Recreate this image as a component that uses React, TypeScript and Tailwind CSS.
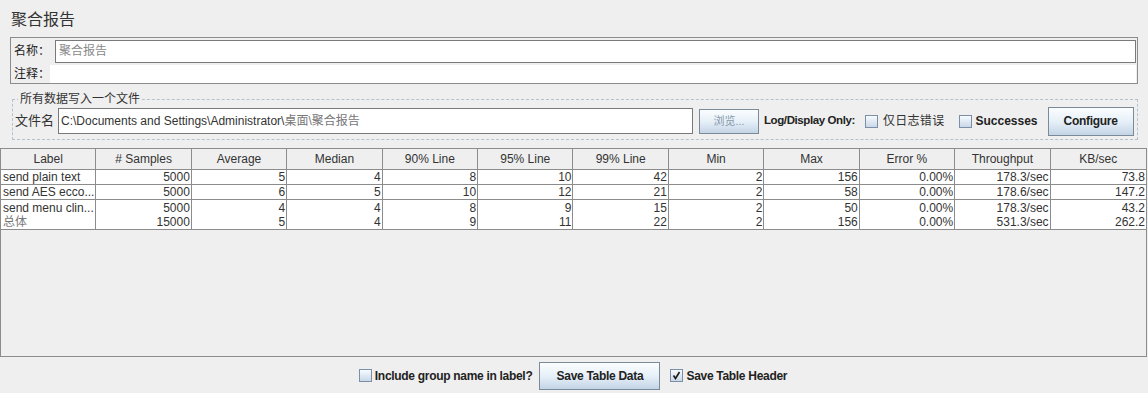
import React from "react"

const columns = [
  "Label",
  "# Samples",
  "Average",
  "Median",
  "90% Line",
  "95% Line",
  "99% Line",
  "Min",
  "Max",
  "Error %",
  "Throughput",
  "KB/sec",
]

const rows = [
  ["send plain text", "5000", "5", "4", "8", "10", "42", "2", "156", "0.00%", "178.3/sec", "73.8"],
  ["send AES ecco...", "5000", "6", "5", "10", "12", "21", "2", "58", "0.00%", "178.6/sec", "147.2"],
  ["send menu clin...", "5000", "4", "4", "8", "9", "15", "2", "50", "0.00%", "178.3/sec", "43.2"],
  ["总体", "15000", "5", "4", "9", "11", "22", "2", "156", "0.00%", "531.3/sec", "262.2"],
]

function CheckBox({ checked = false }: { checked?: boolean }) {
  return (
    <span className="w-[13px] h-[13px] border border-[#7b8fa6] bg-gradient-to-b from-[#f7fbfe] to-[#c9d8e8] flex items-center justify-center shrink-0">
      {checked && (
        <svg width="9" height="9" viewBox="0 0 9 9">
          <path d="M1.5 4.5 L3.5 7.5 L7.5 1" stroke="#1a1a1a" strokeWidth="1.6" fill="none" />
        </svg>
      )}
    </span>
  )
}

function MetalButton({ children, className = "" }: { children: React.ReactNode; className?: string }) {
  return (
    <div
      className={
        "border border-[#7a8a99] bg-gradient-to-b from-[#fbfdff] via-[#e6f0f8] to-[#c4d4e6] flex items-center justify-center shrink-0 whitespace-nowrap " +
        className
      }
    >
      {children}
    </div>
  )
}

export default function App() {
  return (
    <div className="w-[1148px] h-[393px] bg-[#efefef] overflow-hidden text-[#222] font-['Liberation_Sans','Noto_Sans_CJK_SC',sans-serif]">
      <div className="pl-[11px] pt-[10px] h-[37px] text-[16px] leading-[20px] text-[#333]">聚合报告</div>

      <div className="ml-[10px] w-[1128px] h-[47px] border border-[#8c8c8c] flex flex-col">
        <div className="flex items-center h-[25px] pt-[1px]">
          <span className="w-[44px] pl-[3px] text-[12px] text-[#222]">名称：</span>
          <div className="flex-1 h-[23px] mr-[1px] bg-white border border-[#7a7a7a] flex items-center pl-[3px] text-[12px] text-[#8a8a8a]">
            聚合报告
          </div>
        </div>
        <div className="flex items-center h-[20px] pt-[1px]">
          <span className="w-[39px] pl-[3px] text-[12px] text-[#222]">注释：</span>
          <div className="flex-1 h-[18px] mr-[1px] bg-white" />
        </div>
      </div>

      <fieldset className="ml-[12px] w-[1126px] mt-[8px] h-[48px] border border-dashed border-[#b4c2d0] px-[2px] pb-0">
        <legend className="ml-[3px] px-[2px] text-[12px] leading-[14px] text-[#333]">所有数据写入一个文件</legend>
        <div className="flex items-center h-[28px] mt-[1px] whitespace-nowrap">
          <span className="w-[43px] shrink-0 text-[13px] text-[#333]">文件名</span>
          <div className="w-[635px] shrink-0 h-[26px] bg-white border border-[#7a7a7a] flex items-center pl-[2px] text-[12px] text-[#333]">
            C:\Documents and Settings\Administrator\<span className="text-[#777]">桌面\聚合报告</span>
          </div>
          <MetalButton className="ml-[6px] w-[60px] h-[25px] text-[11px] text-[#8899aa]">浏览...</MetalButton>
          <span className="ml-[5px] shrink-0 text-[11.5px] font-bold tracking-[-0.4px] text-[#222]">Log/Display Only:</span>
          <span className="ml-[10px] shrink-0">
            <CheckBox />
          </span>
          <span className="ml-[5px] shrink-0 text-[12px] text-[#333] tracking-[0.3px]">仅日志错误</span>
          <span className="ml-[15px] shrink-0">
            <CheckBox />
          </span>
          <span className="ml-[3px] shrink-0 text-[12px] font-bold text-[#222]">Successes</span>
          <MetalButton className="ml-[10px] w-[86px] h-[29px] text-[12px] font-bold tracking-[-0.3px] text-[#222]">
            Configure
          </MetalButton>
        </div>
      </fieldset>

      <div className="mt-[8px] w-[1147px] h-[209px] border-l border-r border-b border-[#8c8c8c] flex flex-col">
        <div className="grid grid-cols-12 h-[22px] border-t border-b border-[#8c8c8c] bg-[#efefef]">
          {columns.map((c) => (
            <div
              key={c}
              className="border-r border-[#8c8c8c] flex items-center justify-center text-[12px] text-[#333] last:border-r-0"
            >
              {c}
            </div>
          ))}
        </div>
        {rows.map((r, i) => (
          <div
            key={i}
            className={
              "grid grid-cols-12 h-[15px] bg-white " +
              (i === 0 || i === 1 || i === 3 ? "border-b border-[#8c8c8c]" : "")
            }
          >
            {r.map((v, j) => (
              <div
                key={j}
                className={
                  "border-r border-[#8c8c8c] flex items-center text-[12px] leading-[14px] text-[#333] overflow-hidden whitespace-nowrap last:border-r-0 " +
                  (j === 0 ? "justify-start pl-[2px]" : "justify-end pr-[1px]") +
                  (j === 0 && i === 3 ? " text-[#777]" : "")
                }
              >
                {v}
              </div>
            ))}
          </div>
        ))}
        <div className="flex-1" />
      </div>

      <div className="flex items-center justify-center h-[37px] pr-[2px]">
        <CheckBox />
        <span className="ml-[3px] text-[12px] font-bold tracking-[-0.3px] text-[#222]">Include group name in label?</span>
        <MetalButton className="ml-[7px] w-[121px] h-[28px] text-[12px] font-bold tracking-[-0.3px] text-[#222]">
          Save Table Data
        </MetalButton>
        <span className="ml-[10px]">
          <CheckBox checked />
        </span>
        <span className="ml-[3px] text-[12px] font-bold tracking-[-0.3px] text-[#222]">Save Table Header</span>
      </div>
    </div>
  )
}
